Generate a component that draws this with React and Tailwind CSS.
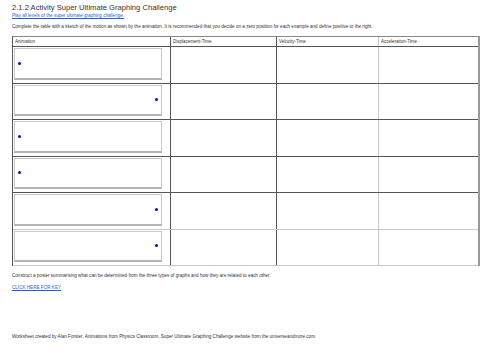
import React from "react";

const rows = [
  { side: "left", line: "border-b-[#555]" },
  { side: "right", line: "border-b-[#555]" },
  { side: "left", line: "border-b-[#555]" },
  { side: "left", line: "border-b-[#555]" },
  { side: "right", line: "border-b-[#c8c8c8]" },
  { side: "right", line: "border-b-[#c8c8c8]" },
];

function AnimBox({ side }) {
  return (
    <div className="h-full pl-[1px] pr-[8px] pt-[1px] pb-[3px]">
      <div
        className={`h-full flex items-center border border-[#c8c8c8] border-b-2 border-b-[#b4b4b4] bg-white ${
          side === "left" ? "justify-start pl-[3px]" : "justify-end pr-[3px]"
        }`}
      >
        <div className="w-[3px] h-[3px] rounded-full bg-[#0a0ad0]" />
      </div>
    </div>
  );
}

export default function App() {
  return (
    <div
      className="w-[500px] h-[354px] bg-white text-[#333] flex flex-col pl-[12px]"
      style={{ fontFamily: '"Liberation Sans", Arial, sans-serif' }}
    >
      <div className="pt-[3px] h-[13px] text-[7.6px] leading-[10px] text-[#333]">
        2.1.2 Activity Super Ultimate Graphing Challenge
      </div>
      <div className="h-[5px] text-[4.6px] leading-[5px] text-[#1f5fd6] underline">
        Play all levels of the super ultimate graphing challenge.
      </div>
      <div className="mt-[6px] h-[5px] text-[4.6px] leading-[5px] text-[#333]">
        Complete the table with a sketch of the motion as shown by the animation. It is recommended that you decide on a zero position for each example and define positive to the right.
      </div>

      <div className="mt-[7px] w-[468px] border-l border-l-[#555] border-t border-t-[#888] border-r-2 border-r-[#999]">
        <div className="grid grid-cols-[158px_106px_102px_100px] h-[10px] border-b border-b-[#555] text-[4.5px] leading-[9px] text-[#333]">
          <div className="pl-[2px] border-r border-r-[#555]">Animation</div>
          <div className="pl-[2px] border-r border-r-[#555]">Displacement-Time</div>
          <div className="pl-[2px] border-r border-r-[#c8c8c8]">Velocity-Time</div>
          <div className="pl-[2px]">Acceleration-Time</div>
        </div>
        {rows.map((r, i) => (
          <div
            key={i}
            className={`grid grid-cols-[158px_106px_102px_100px] h-[36.5px] border-b ${r.line}`}
          >
            <div className="border-r border-r-[#555]">
              <AnimBox side={r.side} />
            </div>
            <div className="border-r border-r-[#555]" />
            <div className="border-r border-r-[#c8c8c8]" />
            <div />
          </div>
        ))}
      </div>

      <div className="mt-[7px] h-[5px] text-[4.6px] leading-[5px] text-[#333]">
        Construct a poster summarising what can be determined from the three types of graphs and how they are related to each other.
      </div>
      <div className="mt-[7px] h-[5px] text-[4.6px] leading-[5px] text-[#1f5fd6] underline">
        CLICK HERE FOR KEY
      </div>
      <div className="mt-[44px] h-[5px] text-[4.6px] leading-[5px] text-[#333]">
        Worksheet created by Alan Forster. Animations from Physics Classroom, Super Ultimate Graphing Challenge website from the universeandmore.com
      </div>
    </div>
  );
}
